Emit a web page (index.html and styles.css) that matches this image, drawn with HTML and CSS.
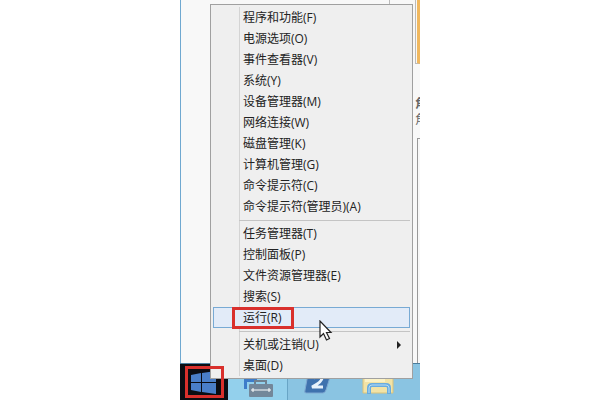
FILE: index.html
```
<!DOCTYPE html>
<html lang="zh-CN">
<head>
    <meta charset="UTF-8">
    <meta name="viewport" content="width=device-width, initial-scale=1.0">
    <title>开始菜单</title>
    <link rel="stylesheet" href="styles.css">
</head>
<body>
    <div class="screen">
        <div class="desktop">
            <div class="window-panel"></div>
            <div class="side-panel">
                <div class="side-tile"></div>
                <p class="side-title">角</p>
                <p class="side-text">角</p>
                <div class="side-box"></div>
            </div>
        </div>

        <div class="taskbar">
            <button class="start-btn" aria-label="开始">
                <svg width="26" height="24" viewBox="0 0 26 24">
                    <path fill="#4a7fc8" d="M0 4l10-2v9H0zM11 2l14-2v11H11zM0 12h10v9L0 19zM11 12h14v11l-14-2z"/>
                </svg>
            </button>
            <button class="task-btn task-active" aria-label="服务器管理器">
                <svg width="32" height="28" viewBox="0 0 32 28">
                    <path fill="#3d7cc9" d="M2 0h13v17H2z"/>
                    <path fill="#93d0ec" d="M5 10h27v18H5z"/>
                    <path fill="none" stroke="#6f808f" stroke-width="2" d="M13 13v-4h11v4"/>
                    <rect x="7" y="12" width="24" height="13" rx="1" fill="#73879a"/>
                    <path stroke="#fff" stroke-width="1" d="M9 18h20M11 16v4M27 16v4"/>
                </svg>
            </button>
            <button class="task-btn" aria-label="PowerShell">
                <svg width="30" height="28" viewBox="0 0 30 28">
                    <path fill="#3f72ae" stroke="#7fa9d2" d="M6 0h21q2 0 1 2l-5 16q-1 3-3 3H3q-2 0-1-3L5 2z"/>
                    <path fill="none" stroke="#e8f2fb" stroke-width="3" d="M11 6q6-3 8 0 0 4-10 9h11"/>
                </svg>
            </button>
            <button class="task-btn" aria-label="文件资源管理器">
                <svg width="32" height="28" viewBox="0 0 32 28">
                    <path fill="#f2e3a6" stroke="#d9c27a" d="M1 1h30v20H1z"/>
                    <path fill="#fbf2c6" d="M3 2h20v8H3z"/>
                    <path fill="none" stroke="#69ace0" stroke-width="4" d="M7 22v-6q0-3 3-3h14q3 0 3 3v6"/>
                    <path fill="none" stroke="#b7dcf5" stroke-width="1" d="M7 21v-5q0-3 3-3h14q3 0 3 3v5"/>
                </svg>
            </button>
        </div>

        <!-- Win+X menu -->
        <div class="menu" role="menu">
            <div class="menu-group">
                <button class="menu-item">程序和功能(F)</button>
                <button class="menu-item">电源选项(O)</button>
                <button class="menu-item">事件查看器(V)</button>
                <button class="menu-item">系统(Y)</button>
                <button class="menu-item">设备管理器(M)</button>
                <button class="menu-item">网络连接(W)</button>
                <button class="menu-item">磁盘管理(K)</button>
                <button class="menu-item">计算机管理(G)</button>
                <button class="menu-item">命令提示符(C)</button>
                <button class="menu-item">命令提示符(管理员)(A)</button>
            </div>
            <div class="menu-group">
                <button class="menu-item">任务管理器(T)</button>
                <button class="menu-item">控制面板(P)</button>
                <button class="menu-item">文件资源管理器(E)</button>
                <button class="menu-item">搜索(S)</button>
                <button class="menu-item selected">运行(R)</button>
            </div>
            <div class="menu-group">
                <button class="menu-item has-sub">关机或注销(U)</button>
                <button class="menu-item">桌面(D)</button>
            </div>
        </div>

        <div class="mark mark-run"></div>
        <div class="mark mark-start"></div>
        <svg class="cursor" width="14" height="22" viewBox="0 0 14 22">
            <path fill="#fff" stroke="#222" stroke-width="1.200" d="M1 1v16l3.500-3.500L7.500 20l3-1.500-3-6H12z"/>
        </svg>
    </div>
</body>
</html>
```
FILE: styles.css
```
* {
    margin: 0;
    padding: 0;
    box-sizing: border-box;
}

body {
    background-color: #fff;
    font-family: "Open Sans", "Noto Sans CJK SC", sans-serif;
    font-size: 12px;
    color: #222;
}

button {
    border: none;
    background: none;
    font: inherit;
    color: inherit;
}

.screen {
    position: relative;
    display: flex;
    flex-direction: column;
    width: 40%;
    height: 100vh;
    margin: 0 auto;
    overflow: hidden;
}

/* Window behind the menu */
.desktop {
    flex: 1;
    display: flex;
    min-height: 0;
    background-color: #f8f8f8;
    border-left: 1px solid #6fa8d0;
}

.window-panel {
    flex: 1;
    border-right: 1px solid #bbb;
    margin-right: 25px;
}

.side-panel {
    width: 5px;
    overflow: hidden;
    color: #666;
}

.side-tile {
    height: 64px;
    border: 1px solid #bbb;
    border-width: 0 0 1px 1px;
    border-right: 3px solid #f0b860;
}

.side-title,
.side-text {
    line-height: 16px;
}

.side-title {
    margin-top: 32px;
    font-weight: bold;
}

.side-box {
    height: 300px;
    margin: 10px 0 0 2px;
    border: 1px solid #999;
    border-width: 1px 0 0 1px;
}

/* Taskbar */
.taskbar {
    display: flex;
    height: 37px;
    background-color: #8ac4e2;
    border-top: 1px solid #4b7d9c;
}

.start-btn {
    width: 20%;
    padding-top: 6px;
    background-color: #0b0d12;
}

.task-btn {
    width: 25%;
    padding-top: 8px;
}

.task-active {
    background-color: #93d0ec;
    border-right: 1px solid #68a5c6;
}

/* Menu */
.menu {
    position: absolute;
    top: 4px;
    left: 30px;
    right: 7px;
    padding: 2px;
    background: linear-gradient(#d4d4d4, #d4d4d4) 28px 2px / 1px calc(100% - 4px) no-repeat #efefef;
    border: 1px solid #a0a0a0;
}

.menu-group + .menu-group {
    margin: 3px 0 0 26px;
    padding-top: 2px;
    border-top: 1px solid #c4c4c4;
}

.menu-group + .menu-group .menu-item {
    width: calc(100% + 26px);
    margin-left: -26px;
}

.menu-item {
    display: flex;
    align-items: center;
    width: 100%;
    height: 21px;
    padding-left: 29px;
    border: 1px solid transparent;
    line-height: 16px;
    white-space: nowrap;
}

.menu-item:hover,
.menu-item.selected {
    background-color: #e2ebf8;
    border-color: #78aad4;
}

.has-sub::after {
    content: "";
    margin-left: auto;
    margin-right: 8px;
    border: 4px solid transparent;
    border-left: 4px solid #222;
    border-right: none;
}

/* Red highlight boxes */
.mark {
    position: absolute;
    border: 3px solid #d9302c;
}

.mark-run {
    left: 52px;
    top: 307px;
    width: 62px;
    height: 22px;
}

.mark-start {
    left: 5px;
    bottom: 2px;
    width: 39px;
    height: 32px;
}

.cursor {
    position: absolute;
    left: 139px;
    top: 320px;
}
```
